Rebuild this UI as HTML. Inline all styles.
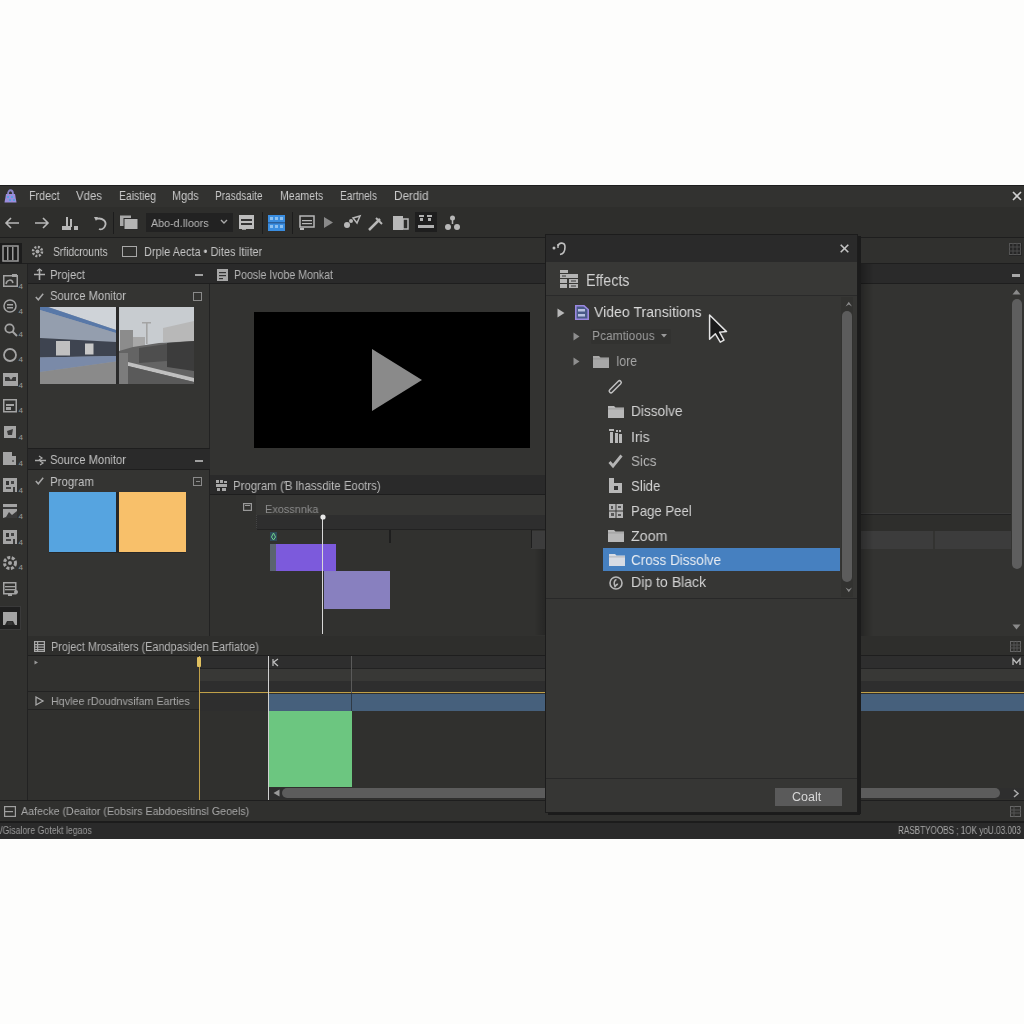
<!DOCTYPE html>
<html><head><meta charset="utf-8">
<style>
*{margin:0;padding:0;box-sizing:border-box}
html,body{width:1024px;height:1024px;overflow:hidden;background:#fdfdfc;font-family:"Liberation Sans",sans-serif}
.a{position:absolute}
.t{position:absolute;white-space:nowrap;color:#c4c4c4;line-height:20px;height:20px;will-change:transform}
svg.a{overflow:visible}
</style></head><body>
<div class="a" style="left:0px;top:185px;width:1024px;height:653.5px;background:#30302e;"></div>
<div class="a" style="left:0px;top:184.5px;width:1024px;height:23px;background:#323230;border-top:1.5px solid #1e1e1e;border-bottom:1px solid #242424"></div>
<div class="a" style="left:0px;top:207px;width:1024px;height:31px;background:#2e2e2c;border-bottom:1px solid #1e1e1e"></div>
<div class="a" style="left:0px;top:238px;width:1024px;height:26px;background:#30302e;border-bottom:1px solid #1e1e1e"></div>
<div class="a" style="left:0px;top:264px;width:28px;height:536px;background:#31312f;border-right:1px solid #222"></div>
<div class="a" style="left:28px;top:264px;width:182px;height:372px;background:#343432;border-right:1px solid #222"></div>
<div class="a" style="left:28px;top:264px;width:182px;height:20px;background:#2a2a2a;border-bottom:1px solid #1e1e1e"></div>
<div class="a" style="left:28px;top:448px;width:182px;height:22px;background:#2a2a2a;border-top:1px solid #1e1e1e;border-bottom:1px solid #1e1e1e"></div>
<div class="a" style="left:210px;top:264px;width:814px;height:211px;background:#333331;"></div>
<div class="a" style="left:210px;top:264px;width:814px;height:20px;background:#2a2a2a;border-bottom:1px solid #1e1e1e"></div>
<div class="a" style="left:254px;top:311.7px;width:276px;height:136.3px;background:#000;"></div>
<svg class="a" style="left:370px;top:347px" width="54" height="66" viewBox="0 0 54 66"><polygon points="2,2 52,33 2,64" fill="#8a8a8a"/></svg>
<div class="a" style="left:210px;top:475px;width:648px;height:161px;background:#31312f;border-top:1px solid #1e1e1e"></div>
<div class="a" style="left:210px;top:475px;width:648px;height:20px;background:#2a2a2a;border-bottom:1px solid #1e1e1e"></div>
<div class="a" style="left:256px;top:495px;width:602px;height:20px;background:#363634;"></div>
<div class="a" style="left:210px;top:515px;width:648px;height:15px;background:#2e2e2e;border-bottom:1px solid #222"></div>
<div class="a" style="left:28px;top:636px;width:996px;height:164px;background:#30302e;border-top:1px solid #1e1e1e"></div>
<div class="a" style="left:28px;top:636px;width:996px;height:20px;background:#2e2e2c;border-bottom:1px solid #1e1e1e"></div>
<div class="a" style="left:0px;top:800px;width:1024px;height:21px;background:#30302e;border-top:1px solid #1e1e1e"></div>
<div class="a" style="left:0px;top:821px;width:1024px;height:17.5px;background:#2a2a2a;border-top:2px solid #1c1c1c"></div>
<svg class="a" style="left:4px;top:188px" width="13" height="16" viewBox="0 0 13 16"><path d="M4,6 C4,1 9,1 9,6" stroke="#8a84c8" stroke-width="1.8" fill="none"/><path d="M2,6 L11,6 L12.5,14.5 L0.5,14.5 Z" fill="#9b8ddc"/><g fill="#5aa0e0"><rect x="3" y="8" width="2" height="2"/><rect x="7" y="8" width="2" height="2"/><rect x="5" y="11" width="2" height="2"/><rect x="9" y="11" width="2" height="2"/></g></svg>
<div class="t" style="left:29.4px;top:185.5px;font-size:12px;transform:scaleX(0.8971);transform-origin:0 50%;color:#c8c8c8;">Frdect</div>
<div class="t" style="left:76.0px;top:185.5px;font-size:12px;transform:scaleX(0.9509);transform-origin:0 50%;color:#c8c8c8;">Vdes</div>
<div class="t" style="left:118.9px;top:185.5px;font-size:12px;transform:scaleX(0.8668);transform-origin:0 50%;color:#c8c8c8;">Eaistieg</div>
<div class="t" style="left:172.4px;top:185.5px;font-size:12px;transform:scaleX(0.9099);transform-origin:0 50%;color:#c8c8c8;">Mgds</div>
<div class="t" style="left:214.9px;top:185.5px;font-size:12px;transform:scaleX(0.8379);transform-origin:0 50%;color:#c8c8c8;">Prasdsaite</div>
<div class="t" style="left:279.8px;top:185.5px;font-size:12px;transform:scaleX(0.8775);transform-origin:0 50%;color:#c8c8c8;">Meamets</div>
<div class="t" style="left:340.0px;top:185.5px;font-size:12px;transform:scaleX(0.8406);transform-origin:0 50%;color:#c8c8c8;">Eartnels</div>
<div class="t" style="left:393.9px;top:185.5px;font-size:12px;transform:scaleX(0.9757);transform-origin:0 50%;color:#c8c8c8;">Derdid</div>
<svg class="a" style="left:1012px;top:191px" width="10" height="10" viewBox="0 0 10 10"><path d="M1,1 L9,9 M9,1 L1,9" stroke="#d0d0d0" stroke-width="1.6"/></svg>
<svg class="a" style="left:4px;top:216px" width="16" height="14" viewBox="0 0 16 14"><path d="M15,7 L2,7 M7,2 L2,7 L7,12" stroke="#b8b8b8" stroke-width="1.6" fill="none"/></svg>
<svg class="a" style="left:34px;top:216px" width="16" height="14" viewBox="0 0 16 14"><path d="M1,7 L14,7 M9,2 L14,7 L9,12" stroke="#b8b8b8" stroke-width="1.6" fill="none"/></svg>
<svg class="a" style="left:62px;top:215px" width="17" height="16" viewBox="0 0 17 16"><rect x="0" y="11" width="9" height="4" fill="#b8b8b8"/><rect x="4" y="2" width="2" height="10" fill="#b8b8b8"/><rect x="8" y="4" width="2" height="8" fill="#b8b8b8"/><rect x="12" y="11" width="4" height="4" fill="#b8b8b8"/></svg>
<svg class="a" style="left:93px;top:216px" width="14" height="15" viewBox="0 0 14 15"><path d="M3,3 C10,1 14,6 12,10 C11,13 8,14 6,13" stroke="#b8b8b8" stroke-width="1.8" fill="none"/><path d="M1,1 L5,1 L3,5 Z" fill="#b8b8b8"/></svg>
<div class="a" style="left:113px;top:212px;width:1px;height:22px;background:#1c1c1c;"></div>
<svg class="a" style="left:120px;top:215px" width="18" height="15" viewBox="0 0 18 15"><rect x="0" y="0.5" width="11" height="10.5" fill="#a8a8a8"/><rect x="4" y="3.5" width="14" height="11" fill="#b4b4b4" stroke="#2a2a2a" stroke-width="1"/></svg>
<div class="a" style="left:146px;top:213px;width:87px;height:19px;background:#222222;"></div>
<div class="t" style="left:150.8px;top:212.5px;font-size:11.5px;transform:scaleX(0.9295);transform-origin:0 50%;color:#b8b8b8;">Abo-d.Iloors</div>
<svg class="a" style="left:220px;top:219px" width="8" height="6" viewBox="0 0 8 6"><path d="M1,1 L4,4 L7,1" stroke="#aaa" stroke-width="1.4" fill="none"/></svg>
<svg class="a" style="left:239px;top:215px" width="15" height="15" viewBox="0 0 15 15"><rect x="0" y="0" width="15" height="14" fill="#bdbdbd"/><rect x="2" y="4" width="11" height="2" fill="#333"/><rect x="2" y="8" width="11" height="2" fill="#333"/><rect x="3" y="14" width="4" height="1" fill="#999"/></svg>
<div class="a" style="left:262px;top:212px;width:1px;height:22px;background:#1c1c1c;"></div>
<svg class="a" style="left:268px;top:215px" width="17" height="16" viewBox="0 0 17 16"><rect x="0" y="0" width="17" height="16" fill="#3a8de0"/><g fill="#8cc0f0"><rect x="2" y="2" width="3" height="3"/><rect x="7" y="2" width="3" height="3"/><rect x="12" y="2" width="3" height="3"/><rect x="2" y="10" width="3" height="3"/><rect x="7" y="10" width="3" height="3"/><rect x="12" y="10" width="3" height="3"/></g><rect x="0" y="7" width="17" height="1.5" fill="#2a5f9a"/></svg>
<div class="a" style="left:292px;top:212px;width:1px;height:22px;background:#1c1c1c;"></div>
<svg class="a" style="left:299px;top:215px" width="16" height="16" viewBox="0 0 16 16"><rect x="1" y="1" width="14" height="11" fill="none" stroke="#b8b8b8" stroke-width="1.5"/><rect x="3" y="5" width="10" height="1.2" fill="#b8b8b8"/><rect x="3" y="8" width="10" height="1.2" fill="#b8b8b8"/><rect x="1" y="13" width="4" height="2" fill="#b8b8b8"/></svg>
<svg class="a" style="left:324px;top:217px" width="10" height="12" viewBox="0 0 10 12"><polygon points="0,0 9,5.5 0,11" fill="#8a8a8a"/></svg>
<svg class="a" style="left:343px;top:215px" width="18" height="15" viewBox="0 0 18 15"><circle cx="4" cy="10" r="3" fill="#b8b8b8"/><circle cx="8" cy="6" r="2" fill="#b8b8b8"/><path d="M10,3 L17,1 L14,8 Z" fill="none" stroke="#b8b8b8" stroke-width="1.5"/></svg>
<svg class="a" style="left:367px;top:216px" width="16" height="15" viewBox="0 0 16 15"><path d="M2,14 L13,3" stroke="#b8b8b8" stroke-width="2.5"/><path d="M9,2 L15,8" stroke="#b8b8b8" stroke-width="2"/></svg>
<svg class="a" style="left:393px;top:216px" width="16" height="14" viewBox="0 0 16 14"><rect x="0" y="0" width="10" height="14" fill="#b8b8b8"/><rect x="10" y="3" width="5" height="10" fill="none" stroke="#b8b8b8" stroke-width="1.5"/></svg>
<div class="a" style="left:415px;top:212px;width:22px;height:20px;background:#1e1e1e;"></div>
<svg class="a" style="left:417px;top:214px" width="18" height="16" viewBox="0 0 18 16"><g fill="#b0b0b0"><rect x="2" y="1" width="5" height="2"/><rect x="3" y="4" width="3" height="3"/><rect x="10" y="1" width="5" height="2"/><rect x="11" y="4" width="3" height="3"/><rect x="1" y="11" width="16" height="3"/></g></svg>
<svg class="a" style="left:444px;top:214px" width="17" height="17" viewBox="0 0 17 17"><circle cx="8.5" cy="4" r="2.5" fill="#b8b8b8"/><circle cx="4" cy="13" r="3" fill="#b8b8b8"/><circle cx="13" cy="13" r="3" fill="#b8b8b8"/><path d="M8.5,6 L8.5,10" stroke="#b8b8b8" stroke-width="1.5"/></svg>
<div class="a" style="left:0px;top:243px;width:22px;height:21px;background:#1c1c1c;"></div>
<svg class="a" style="left:2px;top:245px" width="17" height="17" viewBox="0 0 17 17"><rect x="1" y="1" width="15" height="15" fill="none" stroke="#9a9a9a" stroke-width="1.5"/><rect x="5" y="2" width="1.5" height="13" fill="#9a9a9a"/><rect x="10" y="2" width="1.5" height="13" fill="#9a9a9a"/></svg>
<svg class="a" style="left:31px;top:245px" width="13" height="13" viewBox="0 0 13 13"><circle cx="6.5" cy="6.5" r="4.5" fill="none" stroke="#aaa" stroke-width="2.5" stroke-dasharray="2 1.5"/><circle cx="6.5" cy="6.5" r="2" fill="#aaa"/></svg>
<div class="t" style="left:52.7px;top:242.2px;font-size:12.5px;transform:scaleX(0.8202);transform-origin:0 50%;color:#c4c4c4;">Srfidcrounts</div>
<div class="a" style="left:122px;top:246px;width:15px;height:11px;background:transparent;border:1.5px solid #a8a8a8"></div>
<div class="t" style="left:144.2px;top:242.2px;font-size:12.5px;transform:scaleX(0.8758);transform-origin:0 50%;color:#c4c4c4;">Drple Aecta • Dites Itiiter</div>
<svg class="a" style="left:3px;top:274px" width="15" height="13" viewBox="0 0 15 13"><rect x="0.75" y="1.75" width="13.5" height="10.5" fill="none" stroke="#a4a4a4" stroke-width="1.5"/><path d="M3,10 C4,5 9,5 10,9" stroke="#a4a4a4" stroke-width="1.5" fill="none"/><rect x="9" y="0" width="5" height="3" fill="#a4a4a4"/></svg>
<div class="a" style="left:18.5px;top:282.5px;font-size:8px;line-height:8px;color:#9c9c9c">4</div>
<svg class="a" style="left:3px;top:299px" width="14" height="14" viewBox="0 0 14 14"><circle cx="7" cy="7" r="6" fill="none" stroke="#a4a4a4" stroke-width="1.5"/><rect x="4" y="5" width="6" height="1.5" fill="#a4a4a4"/><rect x="4" y="8" width="6" height="1.5" fill="#a4a4a4"/></svg>
<div class="a" style="left:18.5px;top:307.5px;font-size:8px;line-height:8px;color:#9c9c9c">4</div>
<svg class="a" style="left:4px;top:322.5px" width="14" height="14" viewBox="0 0 14 14"><circle cx="5.5" cy="5.5" r="4.2" fill="none" stroke="#a4a4a4" stroke-width="1.8"/><path d="M8.5,8.5 L13,13" stroke="#a4a4a4" stroke-width="2"/></svg>
<div class="a" style="left:18.5px;top:331.0px;font-size:8px;line-height:8px;color:#9c9c9c">4</div>
<svg class="a" style="left:3px;top:347.5px" width="14" height="14" viewBox="0 0 14 14"><circle cx="7" cy="7" r="6" fill="none" stroke="#a4a4a4" stroke-width="1.8"/></svg>
<div class="a" style="left:18.5px;top:356.0px;font-size:8px;line-height:8px;color:#9c9c9c">4</div>
<svg class="a" style="left:3px;top:373px" width="15" height="13" viewBox="0 0 15 13"><rect x="0" y="0" width="15" height="13" fill="#a4a4a4"/><path d="M2,11 L2,4 L6,4 L8,7 L10,4 L13,4 L13,11 Z" fill="#3a3a3a"/><rect x="2" y="8" width="11" height="3" fill="#a4a4a4"/></svg>
<div class="a" style="left:18.5px;top:381.5px;font-size:8px;line-height:8px;color:#9c9c9c">4</div>
<svg class="a" style="left:3px;top:398.5px" width="14" height="14" viewBox="0 0 14 14"><rect x="0.75" y="0.75" width="12.5" height="12" fill="none" stroke="#a4a4a4" stroke-width="1.5"/><rect x="3" y="5" width="8" height="2" fill="#a4a4a4"/><rect x="3" y="8" width="5" height="3" fill="#a4a4a4"/></svg>
<div class="a" style="left:18.5px;top:407.0px;font-size:8px;line-height:8px;color:#9c9c9c">4</div>
<svg class="a" style="left:3px;top:425px" width="14" height="14" viewBox="0 0 14 14"><path d="M1,1 L13,1 L13,13 L1,13 Z" fill="#a4a4a4"/><path d="M4,6 L10,4 L9,10 L5,10 Z" fill="#3a3a3a"/></svg>
<div class="a" style="left:18.5px;top:433.5px;font-size:8px;line-height:8px;color:#9c9c9c">4</div>
<svg class="a" style="left:3px;top:451.6px" width="14" height="14" viewBox="0 0 14 14"><path d="M0,0 L9,0 L9,4 L13,4 L13,13 L0,13 Z" fill="#a4a4a4"/><rect x="9" y="8" width="2" height="2" fill="#666"/></svg>
<div class="a" style="left:18.5px;top:460.1px;font-size:8px;line-height:8px;color:#9c9c9c">4</div>
<svg class="a" style="left:3px;top:478px" width="14" height="14" viewBox="0 0 14 14"><rect x="0" y="0" width="14" height="14" fill="#a4a4a4"/><rect x="3" y="3" width="3" height="4" fill="#333"/><rect x="8" y="3" width="3" height="3" fill="#444"/><rect x="3" y="9" width="5" height="2" fill="#444"/><rect x="10" y="9" width="2" height="5" fill="#3a3a3a"/></svg>
<div class="a" style="left:18.5px;top:486.5px;font-size:8px;line-height:8px;color:#9c9c9c">4</div>
<svg class="a" style="left:3px;top:504px" width="14" height="14" viewBox="0 0 14 14"><rect x="0" y="0" width="14" height="14" fill="#a4a4a4"/><rect x="0" y="3" width="14" height="2" fill="#3a3a3a"/><path d="M3,13 L6,8 L9,11 L14,7 L14,14 L0,14 Z" fill="#3a3a3a"/></svg>
<div class="a" style="left:18.5px;top:512.5px;font-size:8px;line-height:8px;color:#9c9c9c">4</div>
<svg class="a" style="left:3px;top:530px" width="14" height="14" viewBox="0 0 14 14"><rect x="0" y="0" width="14" height="14" fill="#a4a4a4"/><rect x="3" y="3" width="3" height="4" fill="#333"/><rect x="8" y="3" width="3" height="3" fill="#444"/><rect x="3" y="9" width="5" height="2" fill="#444"/><rect x="10" y="9" width="2" height="5" fill="#3a3a3a"/></svg>
<div class="a" style="left:18.5px;top:538.5px;font-size:8px;line-height:8px;color:#9c9c9c">4</div>
<svg class="a" style="left:3px;top:555.7px" width="14" height="14" viewBox="0 0 14 14"><circle cx="7" cy="7" r="5.5" fill="none" stroke="#a4a4a4" stroke-width="3" stroke-dasharray="3 1.5"/><circle cx="7" cy="7" r="2" fill="#a4a4a4"/></svg>
<div class="a" style="left:18.5px;top:564.2px;font-size:8px;line-height:8px;color:#9c9c9c">4</div>
<svg class="a" style="left:3px;top:582px" width="15" height="14" viewBox="0 0 15 14"><rect x="0.75" y="0.75" width="12" height="11" fill="none" stroke="#a4a4a4" stroke-width="1.5"/><rect x="2" y="4" width="10" height="1.3" fill="#a4a4a4"/><rect x="2" y="7" width="10" height="1.3" fill="#a4a4a4"/><rect x="5" y="12" width="4" height="2" fill="#a4a4a4"/><circle cx="13" cy="10" r="2" fill="#a4a4a4"/></svg>
<div class="a" style="left:0px;top:606px;width:21px;height:24px;background:#1f1f1f;border:1px solid #3a3a3a;border-left:none"></div>
<svg class="a" style="left:3px;top:611.5px" width="14" height="14" viewBox="0 0 14 14"><rect x="0" y="0" width="14" height="13" fill="#a4a4a4"/><path d="M2,13 L4,9 L10,9 L12,13 Z" fill="#2a2a2a"/><rect x="5" y="10" width="4" height="3" fill="#333"/></svg>
<svg class="a" style="left:34px;top:269px" width="11" height="11" viewBox="0 0 11 11"><path d="M5.5,0 L5.5,11 M0,5.5 L11,5.5" stroke="#b0b0b0" stroke-width="1.6"/><path d="M3,2 L5.5,0 L8,2" stroke="#b0b0b0" stroke-width="1.2" fill="none"/></svg>
<div class="t" style="left:50.4px;top:264.6px;font-size:13.5px;transform:scaleX(0.8327);transform-origin:0 50%;color:#c0c0c0;">Project</div>
<div class="a" style="left:195px;top:274px;width:8px;height:2px;background:#a0a0a0;"></div>
<svg class="a" style="left:35px;top:293px" width="9" height="8" viewBox="0 0 9 8"><path d="M0.8,4 L3.3,6.8 L8.2,0.8" stroke="#a8a8a8" stroke-width="1.5" fill="none"/></svg>
<div class="t" style="left:50.4px;top:285.8px;font-size:13.5px;transform:scaleX(0.8298);transform-origin:0 50%;color:#c0c0c0;">Source Monitor</div>
<div class="a" style="left:193px;top:292px;width:9px;height:9px;background:transparent;border:1.3px solid #8a8a8a"></div>
<div class="a" style="left:198px;top:297px;width:0px;height:0px;background:#777;"></div>
<svg class="a" style="left:40px;top:307px" width="76" height="77" viewBox="0 0 76 77">
<rect width="76" height="77" fill="#909aaa"/>
<polygon points="8,0 76,0 76,23" fill="#cfd3d8"/>
<polygon points="0,0 8,0 76,23 76,26 0,3" fill="#5878a8"/>
<polygon points="0,3 76,26 76,35 0,31" fill="#949eae"/>
<polygon points="0,31 76,35 76,49 0,50.5" fill="#3e4450"/>
<rect x="16" y="34" width="14" height="14.5" fill="#c0c0c0"/>
<rect x="45" y="36.5" width="8.5" height="11" fill="#c8c8c8"/>
<polygon points="0,50.5 76,49 76,54.5 0,65" fill="#7a8aa8"/>
<polygon points="0,65 76,54.5 76,77 0,77" fill="#8a8a8a"/>
</svg>
<div class="a" style="left:116px;top:307px;width:3px;height:77px;background:#2a2a2a;"></div>
<svg class="a" style="left:119px;top:307px" width="75" height="77" viewBox="0 0 75 77">
<rect width="75" height="77" fill="#c8ccd0"/>
<polygon points="44,21 75,14 75,35 44,35" fill="#b8b8b8"/>
<rect x="1" y="23" width="13" height="26" fill="#8c8c8c"/>
<rect x="14" y="30" width="12" height="14" fill="#a8a8a8"/>
<rect x="27" y="15" width="1.6" height="22" fill="#a4a4a4"/>
<rect x="23" y="15" width="9" height="1.5" fill="#a4a4a4"/>
<polygon points="0,44 14,40 40,36 75,34 75,77 0,77" fill="#646464"/>
<polygon points="48,36 75,34 75,64 48,60" fill="#3c3c3c"/>
<polygon points="20,41 48,37 48,54 20,56" fill="#4e4e4e"/>
<polygon points="9,55 75,71 75,75 9,59" fill="#c0c0c0"/>
<polygon points="9,59 75,75 75,77 9,77" fill="#5a5a5a"/>
<polygon points="0,46 9,46 9,77 0,77" fill="#7c7c7c"/>
</svg>
<svg class="a" style="left:35px;top:456px" width="11" height="9" viewBox="0 0 11 9"><path d="M0,4.5 L11,4.5" stroke="#aaa" stroke-width="1.5"/><path d="M4,0 L7,2 L4,4 M5,5 L8,7 L5,9" stroke="#aaa" stroke-width="1.2" fill="none"/></svg>
<div class="t" style="left:50.4px;top:450.0px;font-size:13.5px;transform:scaleX(0.8298);transform-origin:0 50%;color:#c0c0c0;">Source Monitor</div>
<div class="a" style="left:195px;top:460px;width:8px;height:2px;background:#a0a0a0;"></div>
<svg class="a" style="left:35px;top:477px" width="9" height="8" viewBox="0 0 9 8"><path d="M0.8,4 L3.3,6.8 L8.2,0.8" stroke="#a8a8a8" stroke-width="1.5" fill="none"/></svg>
<div class="t" style="left:50.4px;top:471.5px;font-size:13.5px;transform:scaleX(0.8495);transform-origin:0 50%;color:#c0c0c0;">Program</div>
<div class="a" style="left:193px;top:477px;width:9px;height:9px;background:transparent;border:1.3px solid #8a8a8a"></div>
<div class="a" style="left:196px;top:481px;width:4px;height:1px;background:#8a8a8a;"></div>
<div class="a" style="left:116px;top:492px;width:3px;height:61px;background:#262626;"></div>
<div class="a" style="left:49px;top:551.5px;width:137px;height:1.5px;background:#282828;"></div>
<div class="a" style="left:49px;top:492px;width:67px;height:59.5px;background:#56a4e0;"></div>
<div class="a" style="left:119px;top:492px;width:67px;height:59.5px;background:#f8c06a;"></div>
<svg class="a" style="left:217px;top:269px" width="11" height="12" viewBox="0 0 11 12"><rect x="0" y="0" width="11" height="12" fill="#a8a8a8"/><rect x="2" y="3" width="7" height="1.2" fill="#333"/><rect x="2" y="6" width="7" height="1.2" fill="#333"/><rect x="2" y="9" width="4" height="1.2" fill="#333"/></svg>
<div class="t" style="left:234.1px;top:264.8px;font-size:12px;transform:scaleX(0.8828);transform-origin:0 50%;color:#b4b4b4;">Poosle Ivobe Monkat</div>
<svg class="a" style="left:216px;top:480px" width="12" height="11" viewBox="0 0 12 11"><g fill="#a8a8a8"><rect x="0" y="0" width="3" height="3"/><rect x="4" y="0" width="3" height="3"/><rect x="8" y="1" width="3" height="2"/><rect x="0" y="4" width="11" height="3"/><rect x="1" y="8" width="3" height="3"/><rect x="6" y="8" width="4" height="3"/></g></svg>
<div class="t" style="left:233.0px;top:475.9px;font-size:12.7px;transform:scaleX(0.9001);transform-origin:0 50%;color:#b8b8b8;">Program (Ɓ lhassdite Eootrs)</div>
<div class="a" style="left:210px;top:495px;width:46px;height:35px;background:#31312f;"></div>
<svg class="a" style="left:243px;top:503px" width="9" height="8" viewBox="0 0 9 8"><rect x="0.6" y="0.6" width="7.8" height="6.8" fill="none" stroke="#999" stroke-width="1.2"/><rect x="2" y="2" width="5" height="1" fill="#999"/></svg>
<div class="t" style="left:265.4px;top:498.5px;font-size:11.5px;transform:scaleX(0.9514);transform-origin:0 50%;color:#8c8c8c;">Exossnnka</div>
<div class="a" style="left:256px;top:515px;width:602px;height:15px;background:#2e2e2e;border-left:1px dotted #444;border-bottom:1px solid #222"></div>
<div class="a" style="left:210px;top:530px;width:336px;height:106px;background:#31312f;"></div>
<div class="a" style="left:389px;top:530px;width:2px;height:13px;background:#1e1e1e;"></div>
<div class="a" style="left:270px;top:532px;width:7px;height:9px;background:#2e4a5a;"></div>
<svg class="a" style="left:270px;top:532px" width="7" height="9" viewBox="0 0 7 9"><path d="M3.5,1 L1.5,5 L3.5,8 L5.5,5 Z" fill="none" stroke="#6fd08a" stroke-width="1"/></svg>
<div class="a" style="left:269.5px;top:543.5px;width:6px;height:27px;background:#5a6470;"></div>
<div class="a" style="left:275.5px;top:543.5px;width:60px;height:27px;background:#7c5adc;"></div>
<div class="a" style="left:323.5px;top:571px;width:66.5px;height:37.5px;background:#8880bf;"></div>
<div class="a" style="left:321.5px;top:517px;width:1.5px;height:117px;background:#d8d8d8;"></div>
<svg class="a" style="left:318.5px;top:512.5px" width="8" height="8" viewBox="0 0 8 8"><circle cx="4" cy="4" r="2.6" fill="#e8e8e8"/></svg>
<svg class="a" style="left:34px;top:641px" width="11" height="11" viewBox="0 0 11 11"><rect x="0.6" y="0.6" width="9.8" height="9.8" fill="none" stroke="#a8a8a8" stroke-width="1.2"/><g fill="#a8a8a8"><rect x="0" y="3" width="11" height="1.2"/><rect x="0" y="5.5" width="11" height="1.2"/><rect x="0" y="8" width="11" height="1.2"/><rect x="3" y="0" width="1.2" height="11"/></g></svg>
<div class="t" style="left:50.7px;top:636.6px;font-size:12px;transform:scaleX(0.9054);transform-origin:0 50%;color:#b4b4b4;">Project Mrosaiters (Eandpasiden Earfiatoe)</div>
<div class="a" style="left:28px;top:656px;width:171px;height:36px;background:#31312f;border-bottom:1px solid #222"></div>
<svg class="a" style="left:34px;top:660px" width="5" height="5" viewBox="0 0 5 5"><path d="M0.5,0.5 L4,2.5 L0.5,4.5" fill="#999"/></svg>
<div class="a" style="left:28px;top:692px;width:171px;height:18px;background:#31312f;border-bottom:1px solid #222"></div>
<svg class="a" style="left:35px;top:696px" width="9" height="10" viewBox="0 0 9 10"><path d="M1,1 L8,5 L1,9 Z" fill="none" stroke="#aaa" stroke-width="1.3"/></svg>
<div class="t" style="left:50.7px;top:691.3px;font-size:11.5px;transform:scaleX(0.9317);transform-origin:0 50%;color:#a8a8a8;">Hqvlee rDoudnvsifam Earties</div>
<div class="a" style="left:28px;top:710px;width:171px;height:90px;background:#30302e;"></div>
<div class="a" style="left:199px;top:656px;width:825px;height:13px;background:#2e2e2e;border-bottom:1px solid #222"></div>
<div class="a" style="left:199px;top:669px;width:825px;height:12px;background:#383836;"></div>
<div class="a" style="left:199px;top:681px;width:825px;height:11.5px;background:#2e2e2e;"></div>
<div class="a" style="left:199px;top:692px;width:825px;height:1px;background:#c0a048;"></div>
<div class="a" style="left:199px;top:693.5px;width:70px;height:17px;background:#2e2e2e;"></div>
<div class="a" style="left:269px;top:693.5px;width:755px;height:17px;background:#46607c;"></div>
<div class="a" style="left:350.5px;top:693.5px;width:1px;height:17px;background:#2f3a46;"></div>
<div class="a" style="left:199px;top:710.5px;width:825px;height:89px;background:#30302e;"></div>
<div class="a" style="left:269px;top:711px;width:83px;height:75.5px;background:#6cc680;"></div>
<div class="a" style="left:350.5px;top:656px;width:1px;height:37px;background:#5a5a5a;"></div>
<div class="a" style="left:269px;top:787.5px;width:755px;height:11px;background:#2e2e2e;"></div>
<svg class="a" style="left:273px;top:789px" width="8" height="8" viewBox="0 0 8 8"><path d="M6.5,0.5 L0.5,4 L6.5,7.5 Z" fill="#9a9a9a"/></svg>
<div class="a" style="left:282px;top:788px;width:718px;height:10px;background:#5c5c5c;border-radius:5px"></div>
<svg class="a" style="left:1012px;top:789px" width="8" height="9" viewBox="0 0 8 9"><path d="M2,1 L6,4.5 L2,8" stroke="#aaa" stroke-width="1.6" fill="none"/></svg>
<div class="a" style="left:198.5px;top:656px;width:1.2px;height:144px;background:#c0a048;"></div>
<div class="a" style="left:197px;top:657px;width:4px;height:10px;background:#e0c060;border-radius:1px"></div>
<div class="a" style="left:268px;top:656px;width:1.4px;height:144px;background:#d0d0d0;"></div>
<svg class="a" style="left:272px;top:658px" width="8" height="9" viewBox="0 0 8 9"><path d="M1,1 L1,8 M1,4.5 L6,1 M2,4.5 L6,8" stroke="#c0c0c0" stroke-width="1.2" fill="none"/></svg>
<svg class="a" style="left:1010px;top:641px" width="11" height="11" viewBox="0 0 11 11"><rect x="0.5" y="0.5" width="10" height="10" fill="none" stroke="#666" stroke-width="1"/><path d="M0,4 L11,4 M0,7 L11,7 M4,0 L4,11 M7,0 L7,11" stroke="#555" stroke-width="1"/></svg>
<svg class="a" style="left:1012px;top:658px" width="9" height="8" viewBox="0 0 9 8"><path d="M1,7 L1,1 L4.5,5 L8,1 L8,7" stroke="#bbb" stroke-width="1.3" fill="none"/></svg>
<svg class="a" style="left:4px;top:806px" width="12" height="11" viewBox="0 0 12 11"><rect x="0.6" y="0.6" width="10.8" height="9.8" fill="none" stroke="#a0a0a0" stroke-width="1.2"/><rect x="0" y="5" width="9" height="1.2" fill="#a0a0a0"/></svg>
<div class="t" style="left:21.3px;top:801.0px;font-size:11.5px;transform:scaleX(0.9273);transform-origin:0 50%;color:#a8a8a8;">Aafecke (Deaitor (Eobsirs Eabdoesitinsl Geoels)</div>
<svg class="a" style="left:1010px;top:806px" width="11" height="11" viewBox="0 0 11 11"><rect x="0.5" y="0.5" width="10" height="10" fill="none" stroke="#666" stroke-width="1"/><path d="M0,4 L11,4 M0,7 L11,7 M4,0 L4,11" stroke="#555" stroke-width="1"/></svg>
<div class="t" style="left:0.4px;top:820.5px;font-size:10px;transform:scaleX(0.8783);transform-origin:0 50%;color:#9a9a9a;">/Gisalore Gotekt legaos</div>
<div class="t" style="left:898.4px;top:820.8px;font-size:10px;transform:scaleX(0.8134);transform-origin:0 50%;color:#a8a8a8;">RASBTYOOBS ; 1OK yoU.03.003</div>
<div class="a" style="left:858px;top:264px;width:166px;height:372px;background:#333331;"></div>
<div class="a" style="left:858px;top:264px;width:166px;height:20px;background:#2a2a2a;border-bottom:1px solid #1e1e1e"></div>
<div class="a" style="left:858px;top:514px;width:153px;height:17px;background:#2e2e2c;"></div>
<div class="a" style="left:858px;top:513px;width:153px;height:1px;background:#3a3a3a;"></div>
<div class="a" style="left:858px;top:514px;width:153px;height:1px;background:#222;"></div>
<div class="a" style="left:531px;top:531px;width:402px;height:18px;background:#3c3c3c;"></div>
<div class="a" style="left:934.5px;top:531px;width:76px;height:18px;background:#3c3c3c;"></div>
<div class="a" style="left:531px;top:530px;width:1px;height:18px;background:#1e1e1e;"></div>
<div class="a" style="left:857px;top:236px;width:4px;height:578px;background:#1b1b1b;"></div>
<div class="a" style="left:534px;top:549px;width:12px;height:86px;background:linear-gradient(90deg,rgba(0,0,0,0),rgba(0,0,0,.22));"></div>
<div class="a" style="left:861px;top:264px;width:12px;height:372px;background:linear-gradient(90deg,rgba(0,0,0,.25),rgba(0,0,0,0));"></div>
<div class="a" style="left:548px;top:812px;width:312px;height:3px;background:#1b1b1b;"></div>
<div class="a" style="left:545px;top:234px;width:313px;height:579px;background:#363634;border:1px solid #1c1c1c"></div>
<div class="a" style="left:546px;top:235px;width:311px;height:27px;background:#2a2a2a;"></div>
<svg class="a" style="left:552px;top:242px" width="16" height="14" viewBox="0 0 16 14"><circle cx="2" cy="6" r="1.5" fill="#c0c0c0"/><path d="M6,4 C7,0 13,0 13,5 C13,9 11,12 8,12.5" stroke="#c0c0c0" stroke-width="1.6" fill="none"/><path d="M6,2 L6,6" stroke="#c0c0c0" stroke-width="1.4"/></svg>
<svg class="a" style="left:840px;top:244px" width="9" height="9" viewBox="0 0 9 9"><path d="M0.7,0.7 L8.3,8.3 M8.3,0.7 L0.7,8.3" stroke="#c4c4c4" stroke-width="1.6"/></svg>
<div class="a" style="left:546px;top:262px;width:311px;height:34px;background:#383836;border-bottom:1px solid #2a2a2a"></div>
<svg class="a" style="left:560px;top:270px" width="18" height="18" viewBox="0 0 18 18"><g fill="#b4b4b4"><rect x="0" y="0" width="8" height="3"/><rect x="0" y="4" width="18" height="4"/><rect x="0" y="9" width="7" height="4"/><rect x="9" y="9" width="9" height="4"/><rect x="0" y="14" width="7" height="4"/><rect x="9" y="14" width="9" height="4"/></g><g fill="#363636"><rect x="2" y="5.5" width="4" height="1"/><rect x="11" y="10.5" width="5" height="1"/><rect x="11" y="15.5" width="5" height="1"/></g></svg>
<div class="t" style="left:585.9px;top:271.0px;font-size:16px;transform:scaleX(0.8940);transform-origin:0 50%;color:#d0d0d0;">Effects</div>
<div class="a" style="left:841px;top:297px;width:12px;height:300px;background:#323230;"></div>
<svg class="a" style="left:845px;top:301px" width="8" height="6" viewBox="0 0 8 6"><path d="M0.5,5.5 L3.8,0.8 L7,5.5 L3.8,3.5 Z" fill="#8a8a8a"/></svg>
<div class="a" style="left:842px;top:311px;width:10px;height:271px;background:#5c5c5c;border-radius:5px"></div>
<svg class="a" style="left:845px;top:587px" width="8" height="6" viewBox="0 0 8 6"><path d="M0.5,0.5 L3.8,5.2 L7,0.5 L3.8,2.5 Z" fill="#8a8a8a"/></svg>
<svg class="a" style="left:557px;top:308px" width="8" height="10" viewBox="0 0 8 10"><path d="M0.5,0.5 L7.5,5 L0.5,9.5 Z" fill="#b8b8b8"/></svg>
<svg class="a" style="left:575px;top:305px" width="14" height="15" viewBox="0 0 14 15"><path d="M0.8,0.8 L9,0.8 L13.2,4.5 L13.2,14.2 L0.8,14.2 Z" fill="#4a5a88" stroke="#9a88e0" stroke-width="1.6"/><rect x="3" y="4" width="7" height="2.5" fill="#b8c0e0"/><rect x="3" y="9" width="7" height="2.5" fill="#b8c0e0"/></svg>
<div class="t" style="left:594.4px;top:302.4px;font-size:15.5px;transform:scaleX(0.9078);transform-origin:0 50%;color:#dadada;">Video Transitions</div>
<div class="a" style="left:591px;top:328.6px;width:80px;height:15.5px;background:#323230;border-radius:2px"></div>
<svg class="a" style="left:573px;top:332px" width="7" height="9" viewBox="0 0 7 9"><path d="M0.5,0.5 L6.5,4.5 L0.5,8.5 Z" fill="#8e8e8e"/></svg>
<div class="t" style="left:591.7px;top:326.1px;font-size:13.7px;transform:scaleX(0.8769);transform-origin:0 50%;color:#9c9c9c;">Pcamtioous</div>
<svg class="a" style="left:661px;top:334px" width="6" height="4" viewBox="0 0 6 4"><path d="M0,0 L6,0 L3,3.5 Z" fill="#9a9a9a"/></svg>
<svg class="a" style="left:573px;top:357px" width="7" height="9" viewBox="0 0 7 9"><path d="M0.5,0.5 L6.5,4.5 L0.5,8.5 Z" fill="#8e8e8e"/></svg>
<svg class="a" style="left:593px;top:354.5px" width="16" height="13" viewBox="0 0 16 13"><path d="M0,1 L6,1 L7.5,2.5 L16,2.5 L16,13 L0,13 Z" fill="#a8a8a8"/><rect x="0" y="3.5" width="16" height="0.8" fill="#777" opacity=".5"/></svg>
<div class="t" style="left:616.4px;top:350.8px;font-size:14.5px;transform:scaleX(0.8405);transform-origin:0 50%;color:#a4a4a4;">Iore</div>
<svg class="a" style="left:608px;top:379px" width="15" height="14" viewBox="0 0 15 14"><path d="M3,12 L11.5,3.5" stroke="#c0c0c0" stroke-width="5" stroke-linecap="round"/><path d="M3,12 L11.5,3.5" stroke="#333" stroke-width="2" stroke-linecap="round"/></svg>
<svg class="a" style="left:608px;top:405px" width="16" height="13" viewBox="0 0 16 13"><path d="M0,1 L6,1 L7.5,2.5 L16,2.5 L16,13 L0,13 Z" fill="#b8b8b8"/><rect x="0" y="3.5" width="16" height="0.8" fill="#777" opacity=".5"/></svg>
<div class="t" style="left:630.7px;top:401.3px;font-size:14.5px;transform:scaleX(0.9401);transform-origin:0 50%;color:#d2d2d2;">Dissolve</div>
<svg class="a" style="left:609px;top:428.5px" width="13" height="14" viewBox="0 0 13 14"><g fill="#b8b8b8"><rect x="0" y="0" width="5" height="2"/><rect x="1" y="3" width="3" height="11"/><rect x="7" y="1" width="2" height="2"/><rect x="6" y="4" width="3" height="10"/><rect x="10" y="5" width="3" height="9"/><rect x="10" y="1" width="2" height="2"/></g></svg>
<div class="t" style="left:630.7px;top:426.6px;font-size:14.5px;transform:scaleX(0.9675);transform-origin:0 50%;color:#d2d2d2;">Iris</div>
<svg class="a" style="left:608px;top:453.5px" width="15" height="14" viewBox="0 0 15 14"><path d="M1.5,8 L5,12 L13.5,1.5" stroke="#b4b4b4" stroke-width="2.8" fill="none"/></svg>
<div class="t" style="left:630.7px;top:451.4px;font-size:14.5px;transform:scaleX(0.9273);transform-origin:0 50%;color:#b4b4b4;">Sics</div>
<svg class="a" style="left:609px;top:477.5px" width="13" height="15" viewBox="0 0 13 15"><path d="M0,0 L5,0 L5,5 L13,5 L13,15 L0,15 Z" fill="#b8b8b8"/><rect x="5" y="8" width="4" height="4" fill="#333"/></svg>
<div class="t" style="left:630.7px;top:476.3px;font-size:14.5px;transform:scaleX(0.9090);transform-origin:0 50%;color:#d2d2d2;">Slide</div>
<svg class="a" style="left:608.5px;top:504px" width="14" height="14" viewBox="0 0 14 14"><g fill="#b4b4b4"><rect x="0" y="0" width="6.5" height="6.5"/><rect x="7.5" y="0" width="6.5" height="6.5"/><rect x="0" y="7.5" width="6.5" height="6.5"/><rect x="7.5" y="7.5" width="6.5" height="6.5"/></g><g fill="#555"><rect x="2" y="2" width="2" height="3"/><rect x="9" y="2" width="3" height="2"/><rect x="2" y="9" width="3" height="3"/><rect x="9" y="10" width="3" height="2"/></g></svg>
<div class="t" style="left:630.7px;top:501.3px;font-size:14.5px;transform:scaleX(0.9057);transform-origin:0 50%;color:#d2d2d2;">Page Peel</div>
<svg class="a" style="left:608px;top:529.2px" width="16" height="13" viewBox="0 0 16 13"><path d="M0,1 L6,1 L7.5,2.5 L16,2.5 L16,13 L0,13 Z" fill="#b8b8b8"/><rect x="0" y="3.5" width="16" height="0.8" fill="#777" opacity=".5"/></svg>
<div class="t" style="left:630.7px;top:526.1px;font-size:14.5px;transform:scaleX(0.9821);transform-origin:0 50%;color:#d2d2d2;">Zoom</div>
<div class="a" style="left:602.8px;top:548.1px;width:237.2px;height:22.7px;background:#4680c0;"></div>
<svg class="a" style="left:608.7px;top:552.8px" width="16" height="13" viewBox="0 0 16 13"><path d="M0,1 L6,1 L7.5,2.5 L16,2.5 L16,13 L0,13 Z" fill="#d8dce4"/><rect x="0" y="3.5" width="16" height="0.8" fill="#777" opacity=".5"/></svg>
<div class="t" style="left:630.9px;top:549.5px;font-size:14.5px;transform:scaleX(0.9320);transform-origin:0 50%;color:#e8ecf2;">Cross Dissolve</div>
<svg class="a" style="left:609px;top:575.5px" width="14" height="14" viewBox="0 0 14 14"><circle cx="7" cy="7" r="6" fill="none" stroke="#b8b8b8" stroke-width="1.6"/><path d="M7.5,3.5 C5,4 4.5,8 6,10.5 C7,9 8,8 9,8.5" stroke="#b8b8b8" stroke-width="1.5" fill="none"/></svg>
<div class="t" style="left:630.9px;top:572.2px;font-size:14.5px;transform:scaleX(0.9721);transform-origin:0 50%;color:#d2d2d2;">Dip to Black</div>
<div class="a" style="left:546px;top:597.5px;width:311px;height:1px;background:#282828;"></div>
<div class="a" style="left:546px;top:778px;width:311px;height:1px;background:#282828;"></div>
<div class="a" style="left:775px;top:788px;width:67px;height:17.5px;background:#5a5a5a;"></div>
<div class="t" style="left:792.4px;top:786.8px;font-size:12.5px;transform:scaleX(0.9936);transform-origin:0 50%;color:#d8d8d8;">Coalt</div>
<svg class="a" style="left:706px;top:312px" width="26" height="34" viewBox="0 0 26 34"><path d="M3.6,3 L3.6,27.3 L9.4,21.8 L14.3,30.2 L18,28.2 L13.6,20.2 L20.5,19.6 Z" fill="#1a1a1a" stroke="#e4e4e4" stroke-width="1.5" stroke-linejoin="round"/></svg>
<div class="a" style="left:1009px;top:243px;width:13px;height:13px;background:#262626;"></div>
<svg class="a" style="left:1009px;top:243px" width="12" height="12" viewBox="0 0 12 12"><rect x="0.5" y="0.5" width="11" height="11" fill="none" stroke="#555" stroke-width="1"/><path d="M0,4 L12,4 M0,8 L12,8 M4,0 L4,12 M8,0 L8,12" stroke="#4a4a4a" stroke-width="1"/></svg>
<div class="a" style="left:1012px;top:274px;width:8px;height:2.5px;background:#a8a8a8;"></div>
<svg class="a" style="left:1012px;top:289px" width="9" height="6" viewBox="0 0 9 6"><path d="M0.5,5.5 L4.5,0.5 L8.5,5.5" fill="#8a8a8a"/></svg>
<div class="a" style="left:1011.5px;top:298.5px;width:10.5px;height:270px;background:#5e5e5e;border-radius:5px"></div>
<svg class="a" style="left:1012px;top:624px" width="9" height="6" viewBox="0 0 9 6"><path d="M0.5,0.5 L4.5,5.5 L8.5,0.5" fill="#8a8a8a"/></svg>
</body></html>
